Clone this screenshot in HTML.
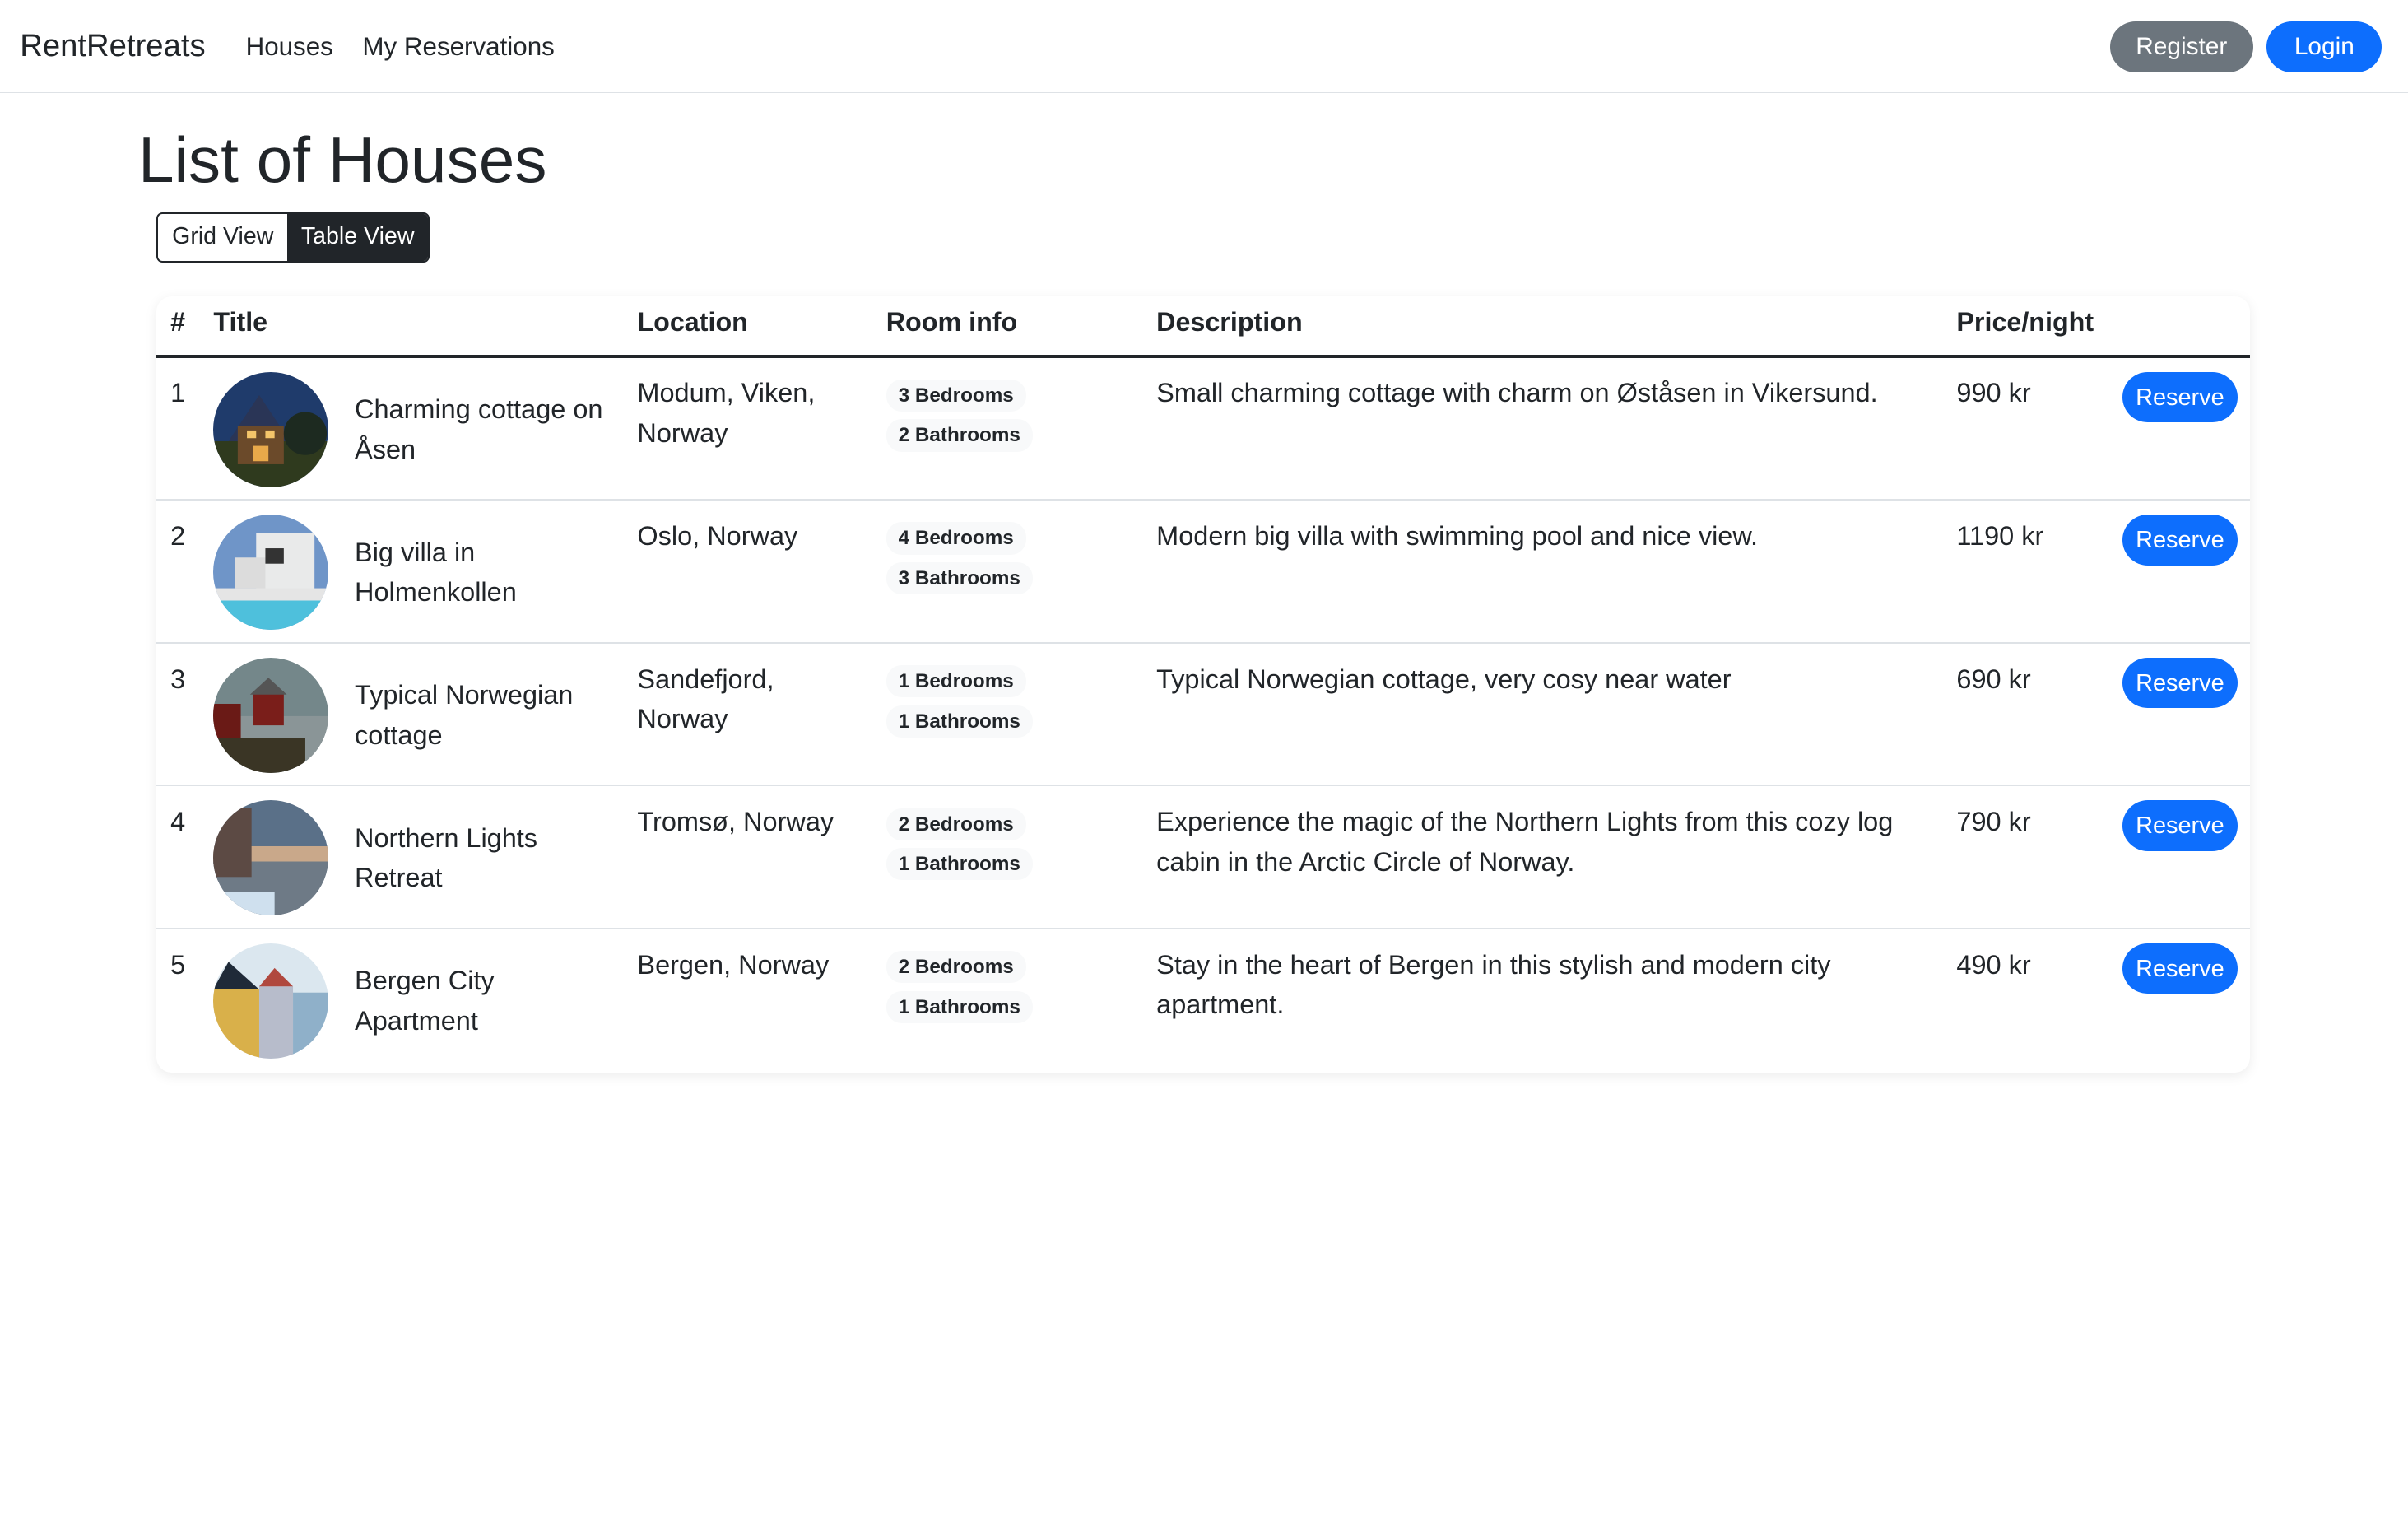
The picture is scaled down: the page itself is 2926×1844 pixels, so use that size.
<!DOCTYPE html>
<html><head><meta charset="utf-8"><style>
html{zoom:1.8661}
body{margin:0;font-family:"Liberation Sans",sans-serif;color:#212529;background:#fff;width:1568px;height:988px;overflow:hidden;position:relative}
.nav{height:60px;border-bottom:1px solid #dee2e6;position:relative}
.brand{position:absolute;left:13px;top:18px;font-size:20.5px}
.nl{position:absolute;top:21px;font-size:16.8px}
.btn{position:absolute;top:14px;height:33px;border-radius:17px;color:#fff;font-size:16px;line-height:33px;text-align:center}
h1{position:absolute;left:90px;top:80px;margin:0;font-weight:500;font-size:42px}
.bg{position:absolute;left:102px;top:138px;height:33px;display:flex;border:1.5px solid #212529;border-radius:4px;overflow:hidden;box-sizing:border-box;font-size:15.3px}
.bg div{padding:0 9px;line-height:30px}
.card{position:absolute;left:102px;top:193px;width:1363px;height:505px;border-radius:10px;box-shadow:0 2px 8px rgba(0,0,0,.08)}
.hd{position:absolute;top:200px;font-weight:bold;font-size:17.3px}
.hl{position:absolute;left:102px;width:1363px;top:231px;height:2px;background:#212529}
.row{position:absolute;left:102px;width:1363px;height:93px;border-bottom:1.5px solid #dee2e6;box-sizing:border-box}
.row .c{position:absolute;top:10px;font-size:17.4px;line-height:26px}
.img{position:absolute;left:37px;top:9px;width:75px;height:75px;border-radius:50%;overflow:hidden}
.tt{position:absolute;left:129px;top:0;height:93px;width:168px;display:flex;align-items:center;font-size:17.4px;line-height:26px}
.bd{position:absolute;left:475px;font-size:13px;font-weight:bold;background:#f8f9fa;border-radius:10px;padding:0 8px;height:21px;line-height:21px}
.rs{position:absolute;left:1280px;top:9px;width:75px;height:33px;border-radius:17px;background:#0d6efd;color:#fff;font-size:15.5px;line-height:34px;text-align:center}
</style></head><body>
<div class="nav">
<div class="brand">RentRetreats</div>
<div class="nl" style="left:160px">Houses</div>
<div class="nl" style="left:236px">My Reservations</div>
<div class="btn" style="left:1374px;width:93px;background:#6c757d">Register</div>
<div class="btn" style="left:1476px;width:75px;background:#0d6efd">Login</div>
</div>
<h1>List of Houses</h1>
<div class="bg"><div>Grid View</div><div style="background:#212529;color:#fff">Table View</div></div>
<div class="card"></div>
<div class="hd" style="left:111px">#</div>
<div class="hd" style="left:139px">Title</div>
<div class="hd" style="left:415px">Location</div>
<div class="hd" style="left:577px">Room info</div>
<div class="hd" style="left:753px">Description</div>
<div class="hd" style="left:1274px">Price/night</div>
<div class="hl"></div>

<div class="row" style="top:233px">
<div class="c" style="left:9px">1</div>
<div class="img"><svg width="75" height="75"><rect width="75" height="75" fill="#1f3b6b"/><rect y="45" width="75" height="30" fill="#2f3a1e"/><polygon points="10,45 30,15 50,45" fill="#2a3556"/><rect x="16" y="35" width="30" height="25" fill="#6b4a2a"/><rect x="22" y="38" width="6" height="5" fill="#f4c56a"/><rect x="34" y="38" width="6" height="5" fill="#f4c56a"/><rect x="26" y="48" width="10" height="10" fill="#e8a94a"/><circle cx="60" cy="40" r="14" fill="#1d2a20"/></svg></div>
<div class="tt">Charming cottage on Åsen</div>
<div class="c" style="left:313px">Modum, Viken,<br>Norway</div>
<div class="bd" style="top:14px">3 Bedrooms</div><div class="bd" style="top:40px">2 Bathrooms</div>
<div class="c" style="left:651px">Small charming cottage with charm on Øståsen in Vikersund.</div>
<div class="c" style="left:1172px">990 kr</div>
<div class="rs">Reserve</div>
</div>

<div class="row" style="top:326px">
<div class="c" style="left:9px">2</div>
<div class="img"><svg width="75" height="75"><rect width="75" height="75" fill="#6f95c8"/><rect x="28" y="12" width="38" height="38" fill="#e9eaea"/><rect x="14" y="28" width="20" height="20" fill="#dcdcdc"/><rect x="34" y="22" width="12" height="10" fill="#333"/><rect y="48" width="75" height="8" fill="#e5e5e5"/><rect y="56" width="75" height="19" fill="#4ec0dc"/></svg></div>
<div class="tt">Big villa in Holmenkollen</div>
<div class="c" style="left:313px">Oslo, Norway</div>
<div class="bd" style="top:14px">4 Bedrooms</div><div class="bd" style="top:40px">3 Bathrooms</div>
<div class="c" style="left:651px">Modern big villa with swimming pool and nice view.</div>
<div class="c" style="left:1172px">1190 kr</div>
<div class="rs">Reserve</div>
</div>

<div class="row" style="top:419px">
<div class="c" style="left:9px">3</div>
<div class="img"><svg width="75" height="75"><rect width="75" height="75" fill="#74878a"/><rect y="38" width="75" height="37" fill="#8a9597"/><rect x="26" y="22" width="20" height="22" fill="#7a1e1a"/><polygon points="24,24 36,13 48,24" fill="#555"/><rect x="0" y="30" width="18" height="25" fill="#6a1a16"/><rect y="52" width="60" height="23" fill="#3a3525"/></svg></div>
<div class="tt">Typical Norwegian cottage</div>
<div class="c" style="left:313px">Sandefjord,<br>Norway</div>
<div class="bd" style="top:14px">1 Bedrooms</div><div class="bd" style="top:40px">1 Bathrooms</div>
<div class="c" style="left:651px">Typical Norwegian cottage, very cosy near water</div>
<div class="c" style="left:1172px">690 kr</div>
<div class="rs">Reserve</div>
</div>

<div class="row" style="top:512px">
<div class="c" style="left:9px">4</div>
<div class="img"><svg width="75" height="75"><rect width="75" height="75" fill="#5a7088"/><rect y="30" width="75" height="10" fill="#c9a88a"/><rect y="40" width="75" height="35" fill="#6e7a86"/><rect x="0" y="5" width="25" height="45" fill="#5c4a44"/><rect y="60" width="40" height="15" fill="#cfe0ee"/></svg></div>
<div class="tt">Northern Lights Retreat</div>
<div class="c" style="left:313px">Tromsø, Norway</div>
<div class="bd" style="top:14px">2 Bedrooms</div><div class="bd" style="top:40px">1 Bathrooms</div>
<div class="c" style="left:651px">Experience the magic of the Northern Lights from this cozy log<br>cabin in the Arctic Circle of Norway.</div>
<div class="c" style="left:1172px">790 kr</div>
<div class="rs">Reserve</div>
</div>

<div class="row" style="top:605px;border-bottom:none">
<div class="c" style="left:9px">5</div>
<div class="img"><svg width="75" height="75"><rect width="75" height="75" fill="#dbe7ef"/><rect x="0" y="30" width="30" height="45" fill="#d9b04a"/><polygon points="0,30 10,12 30,30" fill="#1f2a38"/><rect x="30" y="28" width="22" height="47" fill="#b7bccb"/><rect x="52" y="32" width="23" height="43" fill="#8fb0c9"/><polygon points="30,28 40,16 52,28" fill="#b0483e"/></svg></div>
<div class="tt">Bergen City<br>Apartment</div>
<div class="c" style="left:313px">Bergen, Norway</div>
<div class="bd" style="top:14px">2 Bedrooms</div><div class="bd" style="top:40px">1 Bathrooms</div>
<div class="c" style="left:651px">Stay in the heart of Bergen in this stylish and modern city<br>apartment.</div>
<div class="c" style="left:1172px">490 kr</div>
<div class="rs">Reserve</div>
</div>
</body></html>
